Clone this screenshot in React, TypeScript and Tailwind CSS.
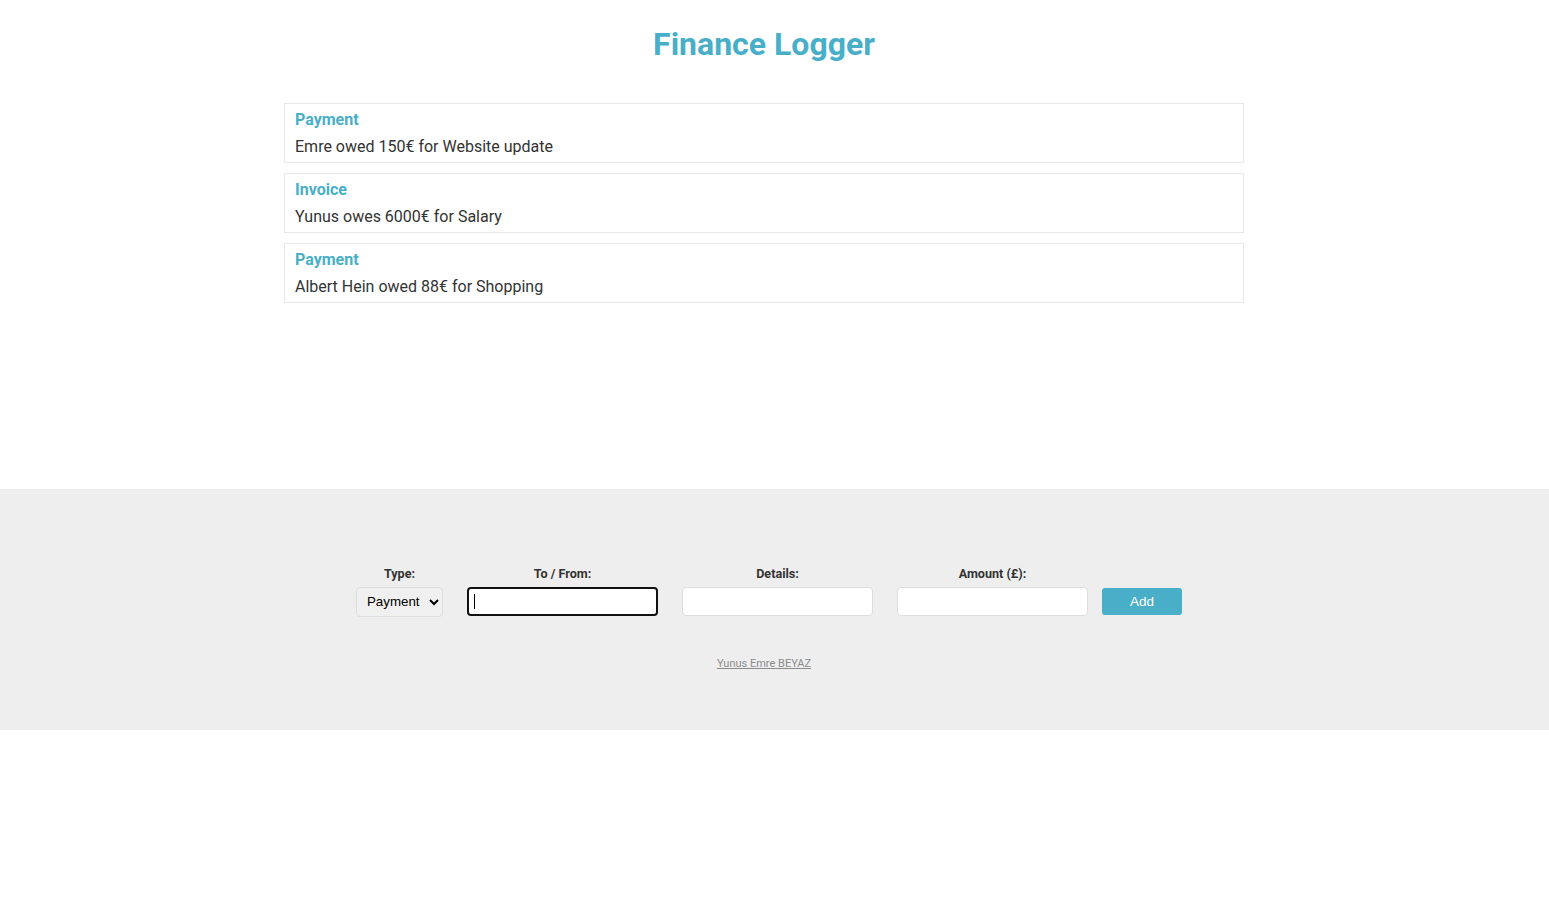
import React from "react";

const items = [
  { type: "Payment", text: "Emre owed 150€ for Website update" },
  { type: "Invoice", text: "Yunus owes 6000€ for Salary" },
  { type: "Payment", text: "Albert Hein owed 88€ for Shopping" },
];

const roboto = "font-['Roboto',sans-serif]";

const App = () => {
  return (
    <div className={`min-h-[908px] bg-white text-[#333] ${roboto}`}>
      {/* header + list */}
      <div className="pr-[21px]">
        <h1 className="pt-[25px] text-center text-[32px] font-bold leading-[38px] text-[#49afc8]">
          Finance Logger
        </h1>
        <ul className="mx-auto mt-[40px] mb-[186px] flex w-[960px] flex-col gap-[10px]">
          {items.map((item, i) => (
            <li key={i} className="border border-[#e8e8e8] px-[10px] pt-[5px] pb-[4px]">
              <h4 className="text-[16px] font-bold leading-[22px] text-[#49afc8]">{item.type}</h4>
              <p className="mt-[5px] text-[16px] leading-[22px] text-[#333]">{item.text}</p>
            </li>
          ))}
        </ul>
      </div>

      {/* form section */}
      <footer className="h-[241px] bg-[#eee] pt-[78px]">
        <form className="flex items-end justify-center pr-[11px]">
          <div className="mr-[24px] flex flex-col items-center">
            <label className="mb-[6px] text-[12.6px] font-bold leading-[14px] text-[#333]">Type:</label>
            <select className="h-[30px] w-[87px] rounded-[4px] border border-[#ddd] bg-[#f0f0f0] pl-[6px] pb-[1px] font-['Liberation_Sans',Arial,sans-serif] text-[13.3px] text-black">
              <option>Payment</option>
              <option>Invoice</option>
            </select>
          </div>
          <div className="mr-[24px] mb-[1px] flex flex-col items-center">
            <label className="mb-[6px] text-[12.6px] font-bold leading-[14px] text-[#333]">To / From:</label>
            <div className="relative">
              <input
                type="text"
                className="block h-[29px] w-[191px] rounded-[4px] border-2 border-[#111] bg-white px-[6px] outline-none"
              />
              <span className="absolute top-[7px] left-[7px] h-[15px] w-px bg-black" />
            </div>
          </div>
          <div className="mr-[24px] mb-[1px] flex flex-col items-center">
            <label className="mb-[6px] text-[12.6px] font-bold leading-[14px] text-[#333]">Details:</label>
            <input
              type="text"
              className="block h-[29px] w-[191px] rounded-[4px] border border-[#ddd] bg-white px-[6px] outline-none"
            />
          </div>
          <div className="mr-[14px] mb-[1px] flex flex-col items-center">
            <label className="mb-[6px] text-[12.6px] font-bold leading-[14px] text-[#333]">Amount (£):</label>
            <input
              type="number"
              className="block h-[29px] w-[191px] rounded-[4px] border border-[#ddd] bg-white px-[6px] outline-none"
            />
          </div>
          <button
            type="button"
            className="mb-[2px] h-[27px] w-[80px] rounded-[3px] bg-[#49afc8] pt-[2px] font-['Liberation_Sans',Arial,sans-serif] text-[13.5px] text-white"
          >
            Add
          </button>
        </form>
        <div className="mt-[33px] pr-[21px] text-center">
          <a href="#" className="text-[11px] leading-[13px] text-[#8c8c8c] underline">
            Yunus Emre BEYAZ
          </a>
        </div>
      </footer>
    </div>
  );
};

export default App;
